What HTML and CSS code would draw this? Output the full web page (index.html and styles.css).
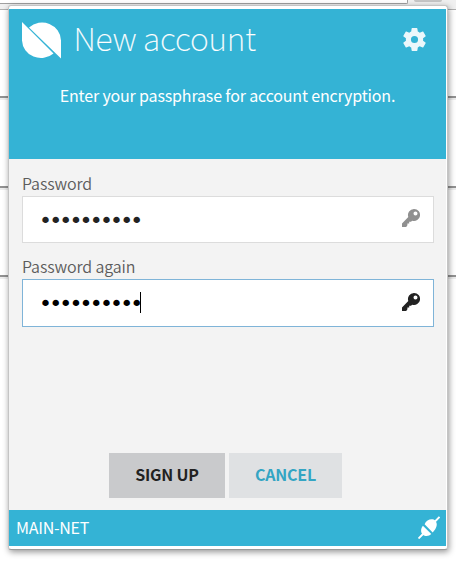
FILE: index.html
```html
<!DOCTYPE html>
<html lang="en">
<head>
<meta charset="utf-8">
<title>New account</title>
<link rel="stylesheet" href="styles.css">
</head>
<body>
<div class="backdrop">
  <div class="toolbar"><div class="address"></div><div class="tool"></div></div>
  <div class="rule rule-first"></div>
  <div class="rule"></div>
  <div class="rule rule-last"></div>
</div>
<main class="popup">
  <header class="header">
    <div class="title-row">
      <svg class="logo" viewBox="0 0 39 37"><path d="M0 0 L31.5 31.5 A19 18.3 0 0 1 0 18.5Z M39 36.5 L7 5.5 A19 18.3 0 0 1 39 18.5Z"/></svg>
      <h1 class="title">New account</h1>
      <svg class="gear" viewBox="2 2 20 20"><path d="M19.43 12.98c.04-.32.07-.64.07-.98s-.03-.66-.07-.98l2.11-1.65c.19-.15.24-.42.12-.64l-2-3.46c-.12-.22-.39-.3-.61-.22l-2.49 1c-.52-.4-1.08-.73-1.69-.98l-.38-2.65A.488.488 0 0 0 14 2h-4c-.25 0-.46.18-.49.42l-.38 2.65c-.61.25-1.17.59-1.69.98l-2.49-1c-.23-.09-.49 0-.61.22l-2 3.46c-.13.22-.07.49.12.64l2.11 1.65c-.04.32-.07.65-.07.98s.03.66.07.98l-2.11 1.65c-.19.15-.24.42-.12.64l2 3.46c.12.22.39.3.61.22l2.49-1c.52.4 1.08.73 1.69.98l.38 2.65c.03.24.24.42.49.42h4c.25 0 .46-.18.49-.42l.38-2.65c.61-.25 1.17-.59 1.69-.98l2.49 1c.23.09.49 0 .61-.22l2-3.46c.12-.22.07-.49-.12-.64l-2.11-1.65zM12 15.1a3.1 3.1 0 1 1 0-6.2 3.1 3.1 0 0 1 0 6.2z"/></svg>
    </div>
    <p class="hint">Enter your passphrase for account encryption.</p>
  </header>
  <section class="form">
    <div class="label">Password</div>
    <div class="field">
      <span class="dots">••••••••••</span>
      <svg class="key" viewBox="0 0 18 18"><path fill-rule="evenodd" d="M12 0a6 6 0 1 1-1.8 11.7L9 12.8H7.2v1.8H5.4V16.2L4.2 18H0v-3.6L6.3 8A6 6 0 0 1 12 0ZM13.5 2.5a2 2 0 1 0 0 4 2 2 0 0 0 0-4Z"/></svg>
    </div>
    <div class="label label-again">Password again</div>
    <div class="field focused">
      <span class="dots">••••••••••</span><span class="caret"></span>
      <svg class="key" viewBox="0 0 18 18"><path fill-rule="evenodd" d="M12 0a6 6 0 1 1-1.8 11.7L9 12.8H7.2v1.8H5.4V16.2L4.2 18H0v-3.6L6.3 8A6 6 0 0 1 12 0ZM13.5 2.5a2 2 0 1 0 0 4 2 2 0 0 0 0-4Z"/></svg>
    </div>
    <div class="actions">
      <div class="button primary">SIGN UP</div>
      <div class="button cancel">CANCEL</div>
    </div>
  </section>
  <footer class="footer">
    <span class="network">MAIN-NET</span>
    <svg class="plug" viewBox="0 0 22 23"><path d="M0.5 22.5 5 18M17 5.5 21.5 0.8" stroke="#fff" stroke-width="1.9"/><path fill="#fff" d="M4.9 9.7 13.3 18.1C11 20.4 7.2 20.9 4.7 18.5S2.9 12 4.9 9.7ZM6.6 8.3C8.5 3.4 14.6 2 17.3 4.8S19 12.2 14.7 16.4Z"/></svg>
  </footer>
</main>
</body>
</html>
```
FILE: styles.css
```css
* { box-sizing: border-box; }
body {
  margin: 0;
  width: 456px;
  height: 561px;
  overflow: hidden;
  background: #fff;
  font-family: "Noto Sans CJK SC", "Noto Sans", sans-serif;
  display: grid;
}
.backdrop, .popup { grid-area: 1 / 1; }
.toolbar {
  height: 10px;
  background: #f0f0f0;
  border-bottom: 1px solid #b0b0b0;
  display: flex;
  gap: 6px;
}
.address {
  width: 408px;
  height: 4px;
  background: #fff;
  border: solid #a0a0a0;
  border-width: 0 1px 1px 0;
  border-radius: 0 0 2px 0;
}
.tool { width: 28px; height: 2px; background: #c6c6c6; border-radius: 0 0 4px 4px; }
.rule { height: 2px; background: #929292; box-shadow: 0 2px 0 #ededed; margin-top: 88px; }
.rule-first { margin-top: 86px; }
.rule-last { margin-top: 87px; }
.popup {
  width: 440px;
  height: 545px;
  margin: 5px 0 0 8px;
  border: 1px solid #c4c4c4;
  border-bottom-color: #999;
  border-radius: 3px;
  background: #fff;
  padding: 3px 1px 3px 0;
  box-shadow: 1px 2px 6px rgba(0,0,0,.42);
  z-index: 1;
  display: flex;
  flex-direction: column;
}
.header { height: 150px; background: #34b3d5; color: #fff; }
.title-row { display: flex; height: 60px; padding: 13px 20px 0 13px; }
.logo { width: 39px; height: 37px; fill: #fff; }
.title {
  margin: -4px 0 0 12.5px;
  font-size: 32px;
  line-height: 38px;
  font-weight: 100;
  letter-spacing: -.2px;
  -webkit-text-stroke: .2px #fff;
  white-space: nowrap;
}
.gear { width: 23px; height: 23px; fill: #ebf7fb; margin: 6px 0 0 auto; }
.hint { margin: 14px 0 0; font-size: 16px; line-height: 24px; letter-spacing: -.16px; text-align: center; white-space: nowrap; }
.form { height: 351px; background: #f3f3f3; padding: 12px 12px 12px 13px; display: flex; flex-direction: column; }
.label { font-size: 16px; line-height: 24px; color: #5c5c5c; font-weight: 350; letter-spacing: -.12px; }
.label-again { margin-top: 11px; }
.field {
  height: 47px;
  margin-top: 1px;
  background: #fff;
  border: 1px solid #dcdcdc;
  display: flex;
  align-items: center;
  padding: 0 13px 0 16px;
  color: #222;
}
.focused { height: 48px; border-color: #7fb4d8; color: #000; }
.dots { font: 22px/20px "DejaVu Sans", sans-serif; letter-spacing: -2.83px; margin-top: 2px; }
.caret { width: 1px; height: 21px; background: #000; margin: -2px 0 0 -.5px; }
.key { width: 18px; height: 18px; margin: -3px 0 0 auto; fill: #909090; }
.focused .key { fill: #222; }
.actions { display: flex; justify-content: center; gap: 4px; margin: auto 5px 0 0; }
.button { height: 45px; line-height: 43px; font-size: 16px; font-weight: 700; letter-spacing: -.2px; text-align: center; }
.primary { width: 116px; background: #c9cacc; color: #222; }
.cancel { width: 113px; background: #dfe1e3; color: #34a5c3; }
.footer { height: 36px; background: #34b3d5; color: #fff; display: flex; align-items: center; padding: 0 6px 0 7px; }
.network { font-size: 16px; line-height: 24px; letter-spacing: -.25px; margin-top: -2px; }
.plug { width: 22px; height: 23px; margin: -2px 0 0 auto; }
```
